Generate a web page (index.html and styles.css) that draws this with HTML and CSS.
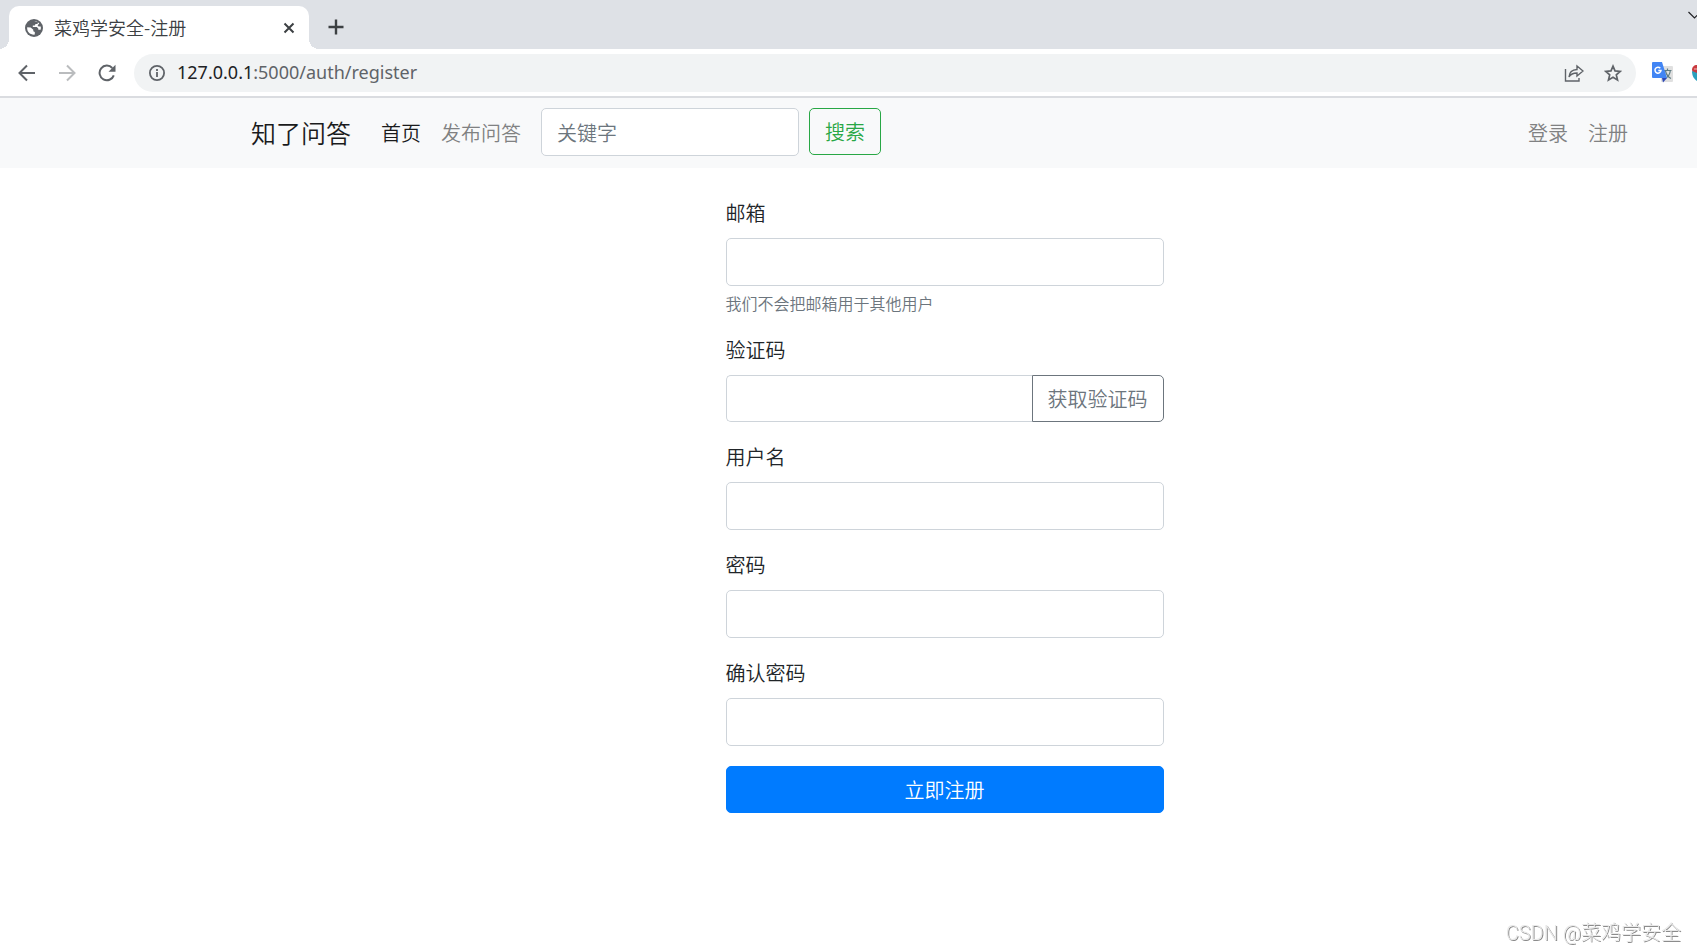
FILE: index.html
```html
<!DOCTYPE html>
<html lang="zh-CN">
<head>
<meta charset="utf-8">
<title>菜鸡学安全-注册</title>
<link rel="stylesheet" href="styles.css">
</head>
<body>
<header class="browser">
  <div class="tabstrip">
    <div class="tab">
      <svg class="tab-icon" width="18" height="18" viewBox="0 0 18 18"><circle cx="9" cy="9" r="9" fill="#5f6368"/><path d="M9.3 2.200c1.600 0 3 .5 4.200 1.400L12.200 5H10.500L9.800 6.500H7.800V8h4l1.500 1.500v1.300h2.300c.4-1.200.4-2.300.1-3.300H13.500L12.600 6.300l1.700-1.900-1.500-1.200M2.200 8.200l3.500.3 2.600 2.200v1.500l1.500.8v2.600C5 16 1.700 12.500 2.200 8.200z" fill="#fff" fill-rule="evenodd"/></svg>
      <span class="tab-title">菜鸡学安全-注册</span>
      <button class="icon-btn" type="button" aria-label="关闭标签页"><svg width="12" height="12" viewBox="0 0 12 12"><path d="M1.500 1.500l9 9M10.500 1.500l-9 9" stroke="#3c4043" stroke-width="2"/></svg></button>
    </div>
    <button class="icon-btn new-tab" type="button" aria-label="新标签页"><svg width="16" height="16" viewBox="0 0 16 16"><path d="M8 .5v15M.5 8h15" stroke="#3c4043" stroke-width="2.400"/></svg></button>
    <button class="icon-btn tab-search" type="button" aria-label="搜索标签页"><svg width="13" height="8" viewBox="0 0 13 8"><path d="M.5 1l6 6 6-6" fill="none" stroke="#202124" stroke-width="1.200"/></svg></button>
  </div>
  <div class="toolbar">
    <button class="icon-btn" type="button" aria-label="后退"><svg width="18" height="18" viewBox="0 0 18 18"><path d="M17 9H2M9 1.500L1.500 9 9 16.500" fill="none" stroke="#5f6368" stroke-width="2"/></svg></button>
    <button class="icon-btn" type="button" aria-label="前进" disabled><svg width="18" height="18" viewBox="0 0 18 18"><path d="M1 9h15M9 1.500L16.500 9 9 16.500" fill="none" stroke="#babcbe" stroke-width="2"/></svg></button>
    <button class="icon-btn" type="button" aria-label="重新加载"><svg width="18" height="18" viewBox="0 0 18 18"><path d="M15.800 11.300A7.300 7.300 0 1 1 14.300 4" fill="none" stroke="#5f6368" stroke-width="2"/><path d="M17.500.8v7h-7z" fill="#5f6368"/></svg></button>
    <div class="omnibox">
      <svg width="16" height="16" viewBox="0 0 16 16"><circle cx="8" cy="8" r="7.100" fill="none" stroke="#5f6368" stroke-width="1.800"/><path d="M8 7v5M8 4v2" stroke="#5f6368" stroke-width="1.800"/></svg>
      <div class="url"><span class="host">127.0.0.1</span>:5000/auth/register</div>
      <button class="icon-btn" type="button" aria-label="分享"><svg width="20" height="18" viewBox="0 0 20 18"><path d="M1.500 5v12h13.500v-3M5 13c.3-4.500 3-7.300 8-7.500V2l6 5-6 5V9C9 9 6.500 10.300 5 13z" fill="none" stroke="#5f6368" stroke-width="1.400"/></svg></button>
      <button class="icon-btn" type="button" aria-label="添加书签"><svg width="18" height="18" viewBox="0 0 18 18"><path d="M9 2.200l2 4.700 5.200.5-3.900 3.400 1.200 5.100L9 13.200l-4.500 2.700 1.200-5.100-3.900-3.400L7 6.900z" fill="none" stroke="#5f6368" stroke-width="1.700"/></svg></button>
    </div>
    <svg class="extension" width="21" height="21" viewBox="0 0 21 21"><rect x="9" y="4" width="12" height="16" rx="1" fill="#e0e0e0"/><path d="M12 8.500h7.500M15.500 6.500v2M13 16.500c3-1.500 5-4 5.300-8M13.500 9c.8 3.500 2.500 6 5.500 7.500" fill="none" stroke="#607d83" stroke-width="1.200"/><path d="M10 16h5l-4 4.500z" fill="#3049b5"/><path d="M1 0h9l5 16H1a1 1 0 0 1-1-1V1a1 1 0 0 1 1-1z" fill="#4285f4"/><path d="M8.300 6.200A3 3 0 1 0 9 8.500H6.300" fill="none" stroke="#fff" stroke-width="1.500"/></svg>
    <svg class="extension-edge" width="5" height="18" viewBox="0 0 5 18"><path d="M5 1C2 1 0 3 0 6l1 3h4z" fill="#c93a3f"/><path d="M0 7l5 2v8C2 15 0 12 0 7z" fill="#2ba0bd"/><path d="M2 5h3" stroke="#f3b7b5"/></svg>
  </div>
</header>

<nav class="navbar">
  <div class="container nav-row">
    <a class="brand" href="#">知了问答</a>
    <a class="nav-link active" href="#">首页</a>
    <a class="nav-link" href="#">发布问答</a>
    <form class="search">
      <input class="control search-input" type="search" placeholder="关键字" aria-label="关键字">
      <button class="btn btn-search" type="button">搜索</button>
    </form>
    <div class="account">
      <a class="nav-link" href="#">登录</a>
      <a class="nav-link" href="#">注册</a>
    </div>
  </div>
</nav>

<main class="container">
  <form class="register">
    <div class="group">
      <label for="email">邮箱</label>
      <input class="control" id="email" type="email" aria-describedby="email-help">
      <small class="help" id="email-help">我们不会把邮箱用于其他用户</small>
    </div>
    <div class="group">
      <label for="captcha">验证码</label>
      <div class="input-group">
        <input class="control" id="captcha" type="text">
        <button class="btn btn-captcha" type="button">获取验证码</button>
      </div>
    </div>
    <div class="group">
      <label for="username">用户名</label>
      <input class="control" id="username" type="text">
    </div>
    <div class="group">
      <label for="password">密码</label>
      <input class="control" id="password" type="password">
    </div>
    <div class="group">
      <label for="confirm">确认密码</label>
      <input class="control" id="confirm" type="password">
    </div>
    <button class="btn btn-submit" type="button">立即注册</button>
  </form>
</main>
<div class="watermark">CSDN @菜鸡学安全</div>
</body>
</html>
```
FILE: styles.css
```css
* { box-sizing: border-box; }

body {
  margin: 0;
  min-height: 100vh;
  background: #fff;
  color: #212529;
  font: 350 20px/30px "Noto Sans CJK SC DemiLight", "Noto Sans CJK SC", sans-serif;
  overflow-x: hidden;
}

a { text-decoration: none; }
input, button { font: inherit; }
svg { display: block; flex: none; }

/* Browser frame */
.browser { border-bottom: 2px solid #dadce0; }

.icon-btn {
  display: flex;
  flex: none;
  padding: 0;
  border: 0;
  background: none;
}

.tabstrip {
  display: flex;
  height: 49px;
  padding: 6px 0 0 9px;
  background: #dee1e6;
}

.tab {
  position: relative;
  display: flex;
  align-items: center;
  width: 300px;
  padding: 0 14px 0 16px;
  border-radius: 10px 10px 0 0;
  background: #fff;
}

.tab::before,
.tab::after {
  content: "";
  position: absolute;
  bottom: 0;
  width: 10px;
  height: 10px;
}
.tab::before { right: 100%; background: radial-gradient(circle at 0 0, #dee1e6 10px, #fff 10px); }
.tab::after { left: 100%; background: radial-gradient(circle at 100% 0, #dee1e6 10px, #fff 10px); }

.tab-title {
  flex: 1;
  margin-left: 11px;
  padding-bottom: 2px;
  color: #3c4043;
  font-size: 18px;
}

.new-tab { align-self: center; margin-left: 19px; padding-bottom: 1px; }
.tab-search { margin: 5px -4px 0 auto; }

.toolbar {
  display: flex;
  align-items: center;
  gap: 22px;
  height: 47px;
  padding-left: 18px;
}

.omnibox {
  display: flex;
  flex: 1;
  align-items: center;
  height: 38px;
  margin-left: -4px;
  padding: 0 14px 0 15px;
  border-radius: 19px;
  background: #f1f3f4;
}
.omnibox .icon-btn { margin-left: 20px; }

.url {
  flex: 1;
  margin-left: 12px;
  padding-bottom: 2px;
  color: #5f6368;
  font: 400 18px/30px "Noto Sans", sans-serif;
}
.host { color: #202124; }

.extension { margin-left: -6px; }
.extension-edge { margin-left: -3px; }

/* Page */
.container { margin: 0 59px 0 251px; }

.navbar { padding: 10px 0 12px; background: #f8f9fa; }

.nav-row { display: flex; align-items: center; }

.brand {
  margin-right: 20px;
  color: #1a1b1c;
  font-size: 25px;
}

.nav-link { padding: 2px 10px 0; color: #808182; }
.nav-link.active { color: #1a1b1c; }

.search { display: flex; gap: 10px; margin-left: 10px; }

.control {
  display: block;
  width: 100%;
  min-width: 0;
  height: 48px;
  padding: 0 15px;
  border: 1px solid #ced4da;
  border-radius: 5px;
  background: #fff;
  color: #495057;
  appearance: none;
}
.control::placeholder { color: #6c757d; opacity: 1; }
.search-input { width: 258px; }

.btn {
  flex: none;
  height: 47px;
  padding: 0 15px;
  border: 1px solid;
  border-radius: 5px;
  background: none;
  white-space: nowrap;
}
.btn-search { color: #28a745; }

.account { display: flex; margin-left: auto; }

.register {
  width: 438px;
  margin: 0 auto;
  padding-top: 30px;
}

.group { margin-bottom: 20px; }
.group label { display: block; margin-bottom: 10px; }

.help {
  display: block;
  margin-top: 5px;
  color: #6c757d;
  font-size: 16px;
  line-height: 24px;
}

.input-group { display: flex; }
.input-group .control { height: 47px; border-right: 0; border-radius: 5px 0 0 5px; }
.btn-captcha { color: #6c757d; border-radius: 0 5px 5px 0; }

.btn-submit {
  width: 100%;
  border-color: #007bff;
  background: #007bff;
  color: #fff;
}

.watermark {
  position: fixed;
  right: 16px;
  bottom: 4px;
  color: #e8e8e8;
  font-family: Roboto, "Noto Sans CJK SC", sans-serif;
  font-weight: 300;
  text-shadow: 1px 1px 0 #8c8c8c;
}
```
